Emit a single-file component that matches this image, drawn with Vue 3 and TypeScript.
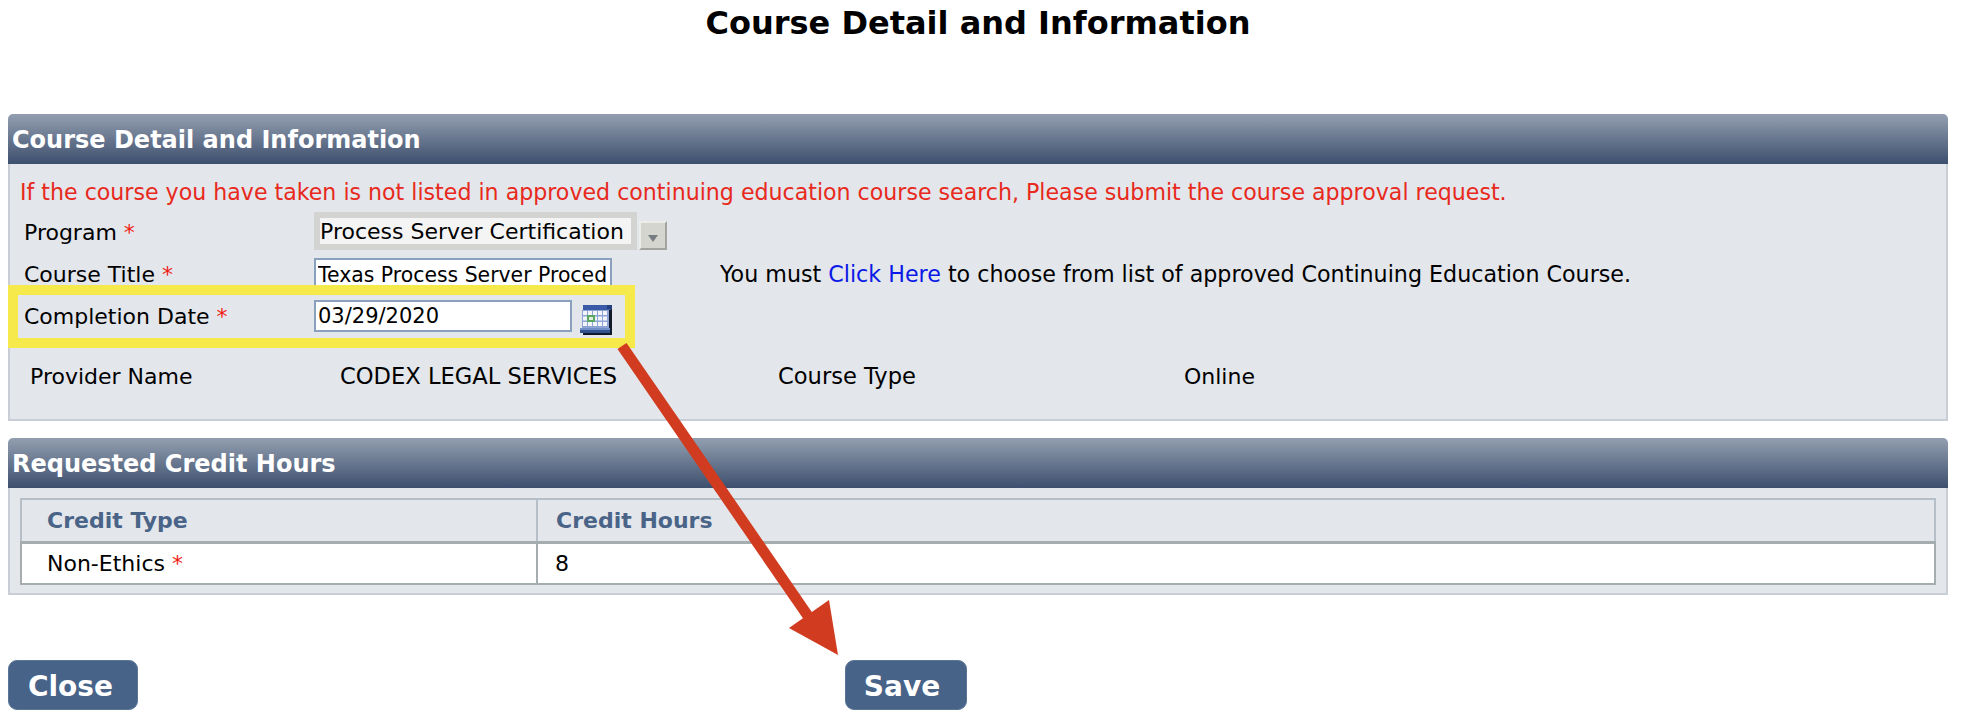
<template>
  <div class="page">
    <h1 class="page-title">Course Detail and Information</h1>

    <section class="panel detail-panel">
      <h2 class="panel-head">Course Detail and Information</h2>
      <div class="panel-body">
        <p class="notice">{{ notice }}</p>

        <div class="field program-row">
          <label class="field-label">Program <span class="req">*</span></label>
          <div class="select-box"><span class="select-value">Process Server Certification</span></div>
          <div class="select-btn"><span class="select-caret"></span></div>
        </div>

        <div class="field title-row">
          <label class="field-label">Course Title <span class="req">*</span></label>
          <input class="text-input course-input" value="Texas Process Server Proced" readonly />
          <span class="hint">You must <a class="link" href="#">Click Here</a> to choose from list of approved Continuing Education Course.</span>
        </div>

        <div class="field date-row">
          <label class="field-label">Completion Date <span class="req">*</span></label>
          <input class="text-input date-input" value="03/29/2020" readonly />
          <svg class="cal-icon" width="32" height="30" viewBox="0 0 32 30">
            <rect x="3" y="3" width="29" height="27" fill="#10182a" />
            <rect x="3" y="0" width="28" height="5" fill="#3a5aa8" />
            <rect x="27" y="0" width="5" height="4" fill="#24407e" />
            <rect x="2" y="5" width="27" height="18" fill="#8ea4d4" />
            <g fill="#f3f5fb">
              <rect v-for="c in calCells" :key="c.x + '-' + c.y" :x="c.x" :y="c.y" width="4" height="4" />
            </g>
            <rect x="7" y="10" width="8" height="7" fill="#5aa860" />
            <rect x="9" y="12" width="4" height="3" fill="#dfeedd" />
            <rect x="0" y="23" width="30" height="2" fill="#6f8fc6" />
            <rect x="0" y="25" width="30" height="3" fill="#33538f" />
          </svg>
        </div>

        <div class="info-row">
          <span class="info-a">Provider Name</span>
          <span class="info-b">CODEX LEGAL SERVICES</span>
          <span class="info-c">Course Type</span>
          <span class="info-d">Online</span>
        </div>
      </div>
    </section>

    <section class="panel hours-panel">
      <h2 class="panel-head">Requested Credit Hours</h2>
      <div class="panel-body hours-body">
        <table class="hours-table">
          <thead>
            <tr>
              <th class="col-type">Credit Type</th>
              <th>Credit Hours</th>
            </tr>
          </thead>
          <tbody>
            <tr>
              <td class="col-type">Non-Ethics <span class="req">*</span></td>
              <td class="col-hours">8</td>
            </tr>
          </tbody>
        </table>
      </div>
    </section>

    <div class="actions">
      <button class="btn close-btn">Close</button>
      <button class="btn save-btn">Save</button>
    </div>

    <!-- red annotation arrow drawn over the page -->
    <svg class="arrow" width="1964" height="724" viewBox="0 0 1964 724">
      <line x1="622" y1="346" x2="808" y2="616" stroke="#d13b20" stroke-width="11" />
      <polygon points="838,655 789,628 829,600" fill="#d13b20" />
    </svg>
  </div>
</template>

<script setup lang="ts">
const notice =
  'If the course you have taken is not listed in approved continuing education course search, Please submit the course approval request.'

// white cells of the little calendar icon
const calCells: { x: number; y: number }[] = []
for (let row = 0; row < 3; row++) {
  for (let col = 0; col < 5; col++) {
    calCells.push({ x: 3 + col * 5, y: 6 + row * 5.5 })
  }
}
</script>

<style scoped>
.page {
  position: relative;
  width: 1964px;
  height: 724px;
  overflow: hidden;
  padding: 0 16px 0 8px;
  box-sizing: border-box;
  background: #fff;
  font-family: "DejaVu Sans", Verdana, sans-serif;
  font-size: 22px;
  color: #000;
}

.page-title {
  margin: 0;
  height: 114px;
  padding: 4px 0 0 0;
  box-sizing: border-box;
  text-align: center;
  font-size: 32px;
  line-height: 38px;
  font-weight: 700;
}

.panel-head {
  margin: 0;
  height: 50px;
  padding-left: 4px;
  border-radius: 5px 5px 0 0;
  background: linear-gradient(#939fb0, #3d4f6e);
  color: #fff;
  font-size: 24px;
  font-weight: 700;
  line-height: 52px;
}

.panel-body {
  background: #e3e6eb;
  border: 2px solid #c9cdd5;
  border-top: 0;
  box-sizing: border-box;
}

.detail-panel .panel-body {
  height: 257px;
  padding: 0;
}

.notice {
  margin: 0;
  padding: 15px 0 0 10px;
  height: 48px;
  box-sizing: border-box;
  color: #e8291c;
  font-size: 22.12px;
  line-height: 26px;
  white-space: nowrap;
}

.req {
  color: #f01c14;
}

.field {
  display: flex;
  align-items: center;
}

.field-label {
  width: 304px;
  padding-left: 14px;
  box-sizing: border-box;
  flex: none;
}

.program-row {
  height: 38px;
}

.program-row .field-label {
  padding-top: 2px;
}

.select-box {
  width: 323px;
  height: 38px;
  padding: 6px;
  box-sizing: border-box;
  background: #d3d3d1;
}

.select-value {
  display: block;
  height: 26px;
  background: #f4f4f4;
  line-height: 27px;
  white-space: nowrap;
}

.select-btn {
  display: flex;
  align-items: center;
  justify-content: center;
  width: 28px;
  height: 29px;
  margin: 8px 0 0 2px;
  box-sizing: border-box;
  background: #d5d5d0;
  border: 2px solid #ecece8;
  border-right-color: #a3a3a0;
  border-bottom-color: #a3a3a0;
}

.select-caret {
  margin-top: 6px;
  border-left: 5px solid transparent;
  border-right: 5px solid transparent;
  border-top: 7px solid #777c81;
}

.title-row {
  height: 27px;
  margin-top: 8px;
  align-items: flex-start;
}

.title-row .field-label {
  line-height: 33px;
}

.text-input {
  display: block;
  box-sizing: border-box;
  margin: 0;
  padding: 0 2px;
  border: 2px solid #8aa1bd;
  border-radius: 0;
  outline: 0;
  background: #fff;
  font-family: inherit;
  font-size: 20.4px;
  color: #000;
}

.course-input {
  width: 298px;
  height: 34px;
  flex: none;
}

.hint {
  margin-left: 108px;
  font-size: 22.2px;
  line-height: 33px;
  white-space: nowrap;
}

.link {
  color: #0a19e6;
  text-decoration: none;
}

.date-row {
  position: relative;
  width: 627px;
  height: 63px;
  margin-left: -2px;
  border: 10px solid #f5e94b;
  box-sizing: border-box;
}

.date-row .field-label {
  width: 296px;
  padding-left: 6px;
}

.date-input {
  width: 258px;
  height: 32px;
  margin-top: -2px;
  font-size: 21px;
  flex: none;
}

.cal-icon {
  margin: 6px 0 0 8px;
  flex: none;
}

.info-row {
  position: relative;
  display: grid;
  grid-template-columns: 310px 438px 406px 1fr;
  padding: 15px 0 0 20px;
  line-height: 27px;
}

.info-b,
.info-c {
  font-size: 22.6px;
}

.hours-panel {
  margin-top: 17px;
}

.hours-body {
  height: 107px;
  padding: 10px 10px 0 10px;
}

.hours-table {
  width: 1916px;
  height: 85px;
  border-collapse: collapse;
  table-layout: fixed;
}

.hours-table th,
.hours-table td {
  box-sizing: border-box;
  text-align: left;
  padding: 0 0 0 18px;
}

.hours-table th {
  height: 43px;
  border: 2px solid #b6bec7;
  border-bottom: 3px solid #a6adaf;
  color: #4a6488;
  font-size: 22px;
  font-weight: 700;
}

.hours-table td {
  height: 42px;
  border: 2px solid #a6adaf;
  background: #fff;
}

.hours-table .col-type {
  width: 516px;
  padding-left: 25px;
}

.hours-table .col-hours {
  padding-left: 17px;
}

.actions {
  display: flex;
  margin-top: 65px;
}

.btn {
  height: 50px;
  padding: 2px 0 0;
  box-sizing: border-box;
  border: 1px solid #5a7596;
  border-radius: 9px;
  background: #476388;
  color: #fff;
  font-family: inherit;
  font-size: 28px;
  font-weight: 700;
}

.close-btn {
  width: 130px;
  padding-right: 5px;
}

.save-btn {
  width: 122px;
  margin-left: 707px;
  padding-right: 8px;
}

.arrow {
  position: absolute;
  left: 0;
  top: 0;
  pointer-events: none;
}
</style>
